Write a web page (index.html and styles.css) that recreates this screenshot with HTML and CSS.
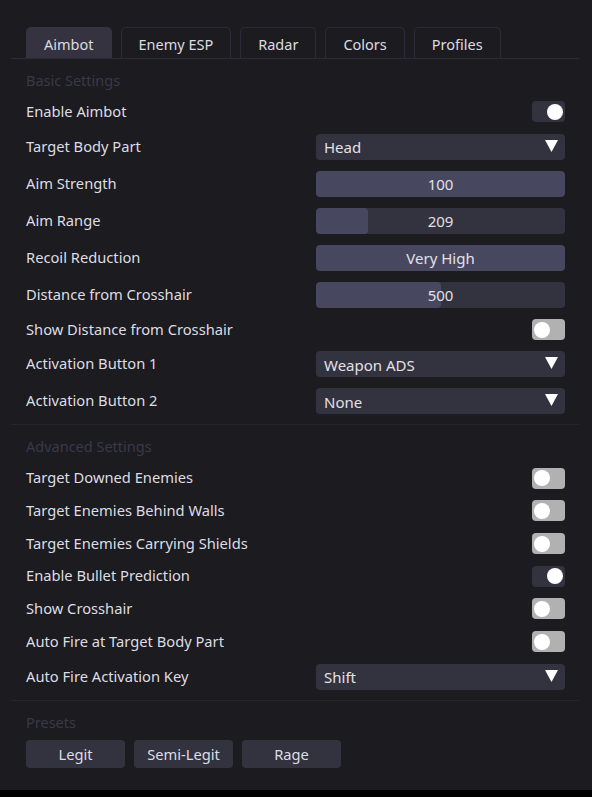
FILE: index.html
```html
<!DOCTYPE html>
<html lang="en">
<head>
  <meta charset="UTF-8">
  <meta name="viewport" content="width=device-width, initial-scale=1.0">
  <title>Aimbot Settings</title>
  <link rel="stylesheet" href="styles.css">
</head>
<body>
<div class="panel">
  <div class="tabs">
    <div class="tab active">Aimbot</div>
    <div class="tab">Enemy ESP</div>
    <div class="tab">Radar</div>
    <div class="tab">Colors</div>
    <div class="tab">Profiles</div>
  </div>

  <div class="section">
    <div class="section-title">Basic Settings</div>
    <div class="row">
      <span class="label">Enable Aimbot</span>
      <div class="toggle on"><span class="knob"></span></div>
    </div>
    <div class="row">
      <span class="label">Target Body Part</span>
      <div class="select">Head<svg class="caret" width="13" height="12" viewBox="0 0 13 12"><polygon points="0,0 13,0 6.5,12" fill="#fff"/></svg></div>
    </div>
    <div class="row">
      <span class="label">Aim Strength</span>
      <div class="slider"><div class="fill" style="width:100%"></div><span class="value">100</span></div>
    </div>
    <div class="row">
      <span class="label">Aim Range</span>
      <div class="slider"><div class="fill" style="width:21%"></div><span class="value">209</span></div>
    </div>
    <div class="row">
      <span class="label">Recoil Reduction</span>
      <div class="slider"><div class="fill" style="width:100%"></div><span class="value">Very High</span></div>
    </div>
    <div class="row">
      <span class="label">Distance from Crosshair</span>
      <div class="slider"><div class="fill" style="width:50%"></div><span class="value">500</span></div>
    </div>
    <div class="row">
      <span class="label">Show Distance from Crosshair</span>
      <div class="toggle"><span class="knob"></span></div>
    </div>
    <div class="row">
      <span class="label">Activation Button 1</span>
      <div class="select">Weapon ADS<svg class="caret" width="13" height="12" viewBox="0 0 13 12"><polygon points="0,0 13,0 6.5,12" fill="#fff"/></svg></div>
    </div>
    <div class="row">
      <span class="label">Activation Button 2</span>
      <div class="select">None<svg class="caret" width="13" height="12" viewBox="0 0 13 12"><polygon points="0,0 13,0 6.5,12" fill="#fff"/></svg></div>
    </div>
  </div>

  <div class="section">
    <div class="section-title">Advanced Settings</div>
    <div class="row">
      <span class="label">Target Downed Enemies</span>
      <div class="toggle"><span class="knob"></span></div>
    </div>
    <div class="row">
      <span class="label">Target Enemies Behind Walls</span>
      <div class="toggle"><span class="knob"></span></div>
    </div>
    <div class="row">
      <span class="label">Target Enemies Carrying Shields</span>
      <div class="toggle"><span class="knob"></span></div>
    </div>
    <div class="row">
      <span class="label">Enable Bullet Prediction</span>
      <div class="toggle on"><span class="knob"></span></div>
    </div>
    <div class="row">
      <span class="label">Show Crosshair</span>
      <div class="toggle"><span class="knob"></span></div>
    </div>
    <div class="row">
      <span class="label">Auto Fire at Target Body Part</span>
      <div class="toggle"><span class="knob"></span></div>
    </div>
    <div class="row">
      <span class="label">Auto Fire Activation Key</span>
      <div class="select">Shift<svg class="caret" width="13" height="12" viewBox="0 0 13 12"><polygon points="0,0 13,0 6.5,12" fill="#fff"/></svg></div>
    </div>
  </div>

  <div class="section last">
    <div class="section-title">Presets</div>
    <div class="presets">
      <button class="preset">Legit</button>
      <button class="preset">Semi-Legit</button>
      <button class="preset">Rage</button>
    </div>
  </div>
</div>
</body>
</html>
```

FILE: styles.css
```css
html {
  background: #000;
}
body {
  margin: 0;
  height: 790px;
  background: #1b1b20;
  font-family: 'Noto Sans', sans-serif;
  color: #dedde3;
}
.panel {
  padding: 27px 13px 0 11px;
}
.tabs {
  display: flex;
  gap: 9px;
  padding-left: 15px;
  border-bottom: 1px solid #2c2b36;
}
.tab {
  height: 31px;
  line-height: 32px;
  padding: 0 17px;
  font-size: 14.5px;
  color: #dcdbe0;
  border: 1px solid #2c2b38;
  border-bottom: none;
  border-radius: 5px 5px 0 0;
  box-sizing: border-box;
}
.tab.active {
  background: #34333f;
  border-color: #34333f;
}
.section {
  padding: 11px 14px 10px 15px;
  border-bottom: 1px solid #26252e;
  display: flex;
  flex-direction: column;
  gap: 11px;
}
.section.last {
  border-bottom: none;
  gap: 8px;
}
.section-title {
  height: 20px;
  line-height: 20px;
  font-size: 14.5px;
  color: #3a3949;
}
.row {
  display: flex;
  justify-content: space-between;
  align-items: center;
  min-height: 21.7px;
}
.label {
  font-size: 14.7px;
  line-height: 18px;
  color: #dedde3;
  padding-bottom: 2px;
}
.select, .slider {
  width: 249px;
  height: 26px;
  border-radius: 4px;
  background: #33323f;
  box-sizing: border-box;
  font-size: 15px;
}
.select {
  display: flex;
  align-items: center;
  justify-content: space-between;
  padding: 1px 7px 0 8px;
  color: #e2e1e6;
}
.caret {
  margin-top: -3px;
}
.slider {
  position: relative;
  overflow: hidden;
  display: flex;
  align-items: center;
  justify-content: center;
}
.slider .fill {
  position: absolute;
  left: 0;
  top: 0;
  bottom: 0;
  background: #484760;
  border-radius: 4px;
}
.slider .value {
  position: relative;
  color: #e2e1e6;
  padding-top: 1px;
}
.toggle {
  width: 33px;
  height: 21px;
  border-radius: 4px;
  background: #b1b1b1;
  display: flex;
  align-items: center;
  padding: 0 2px;
  box-sizing: border-box;
}
.toggle.on {
  background: #33323f;
  justify-content: flex-end;
}
.knob {
  width: 16px;
  height: 16px;
  border-radius: 50%;
  background: #fff;
}
.presets {
  display: flex;
  gap: 9px;
}
.preset {
  width: 99px;
  height: 28px;
  border: none;
  border-radius: 4px;
  background: #33323f;
  color: #dedde3;
  font-family: 'Noto Sans', sans-serif;
  font-size: 14.7px;
  padding: 0;
}
```
